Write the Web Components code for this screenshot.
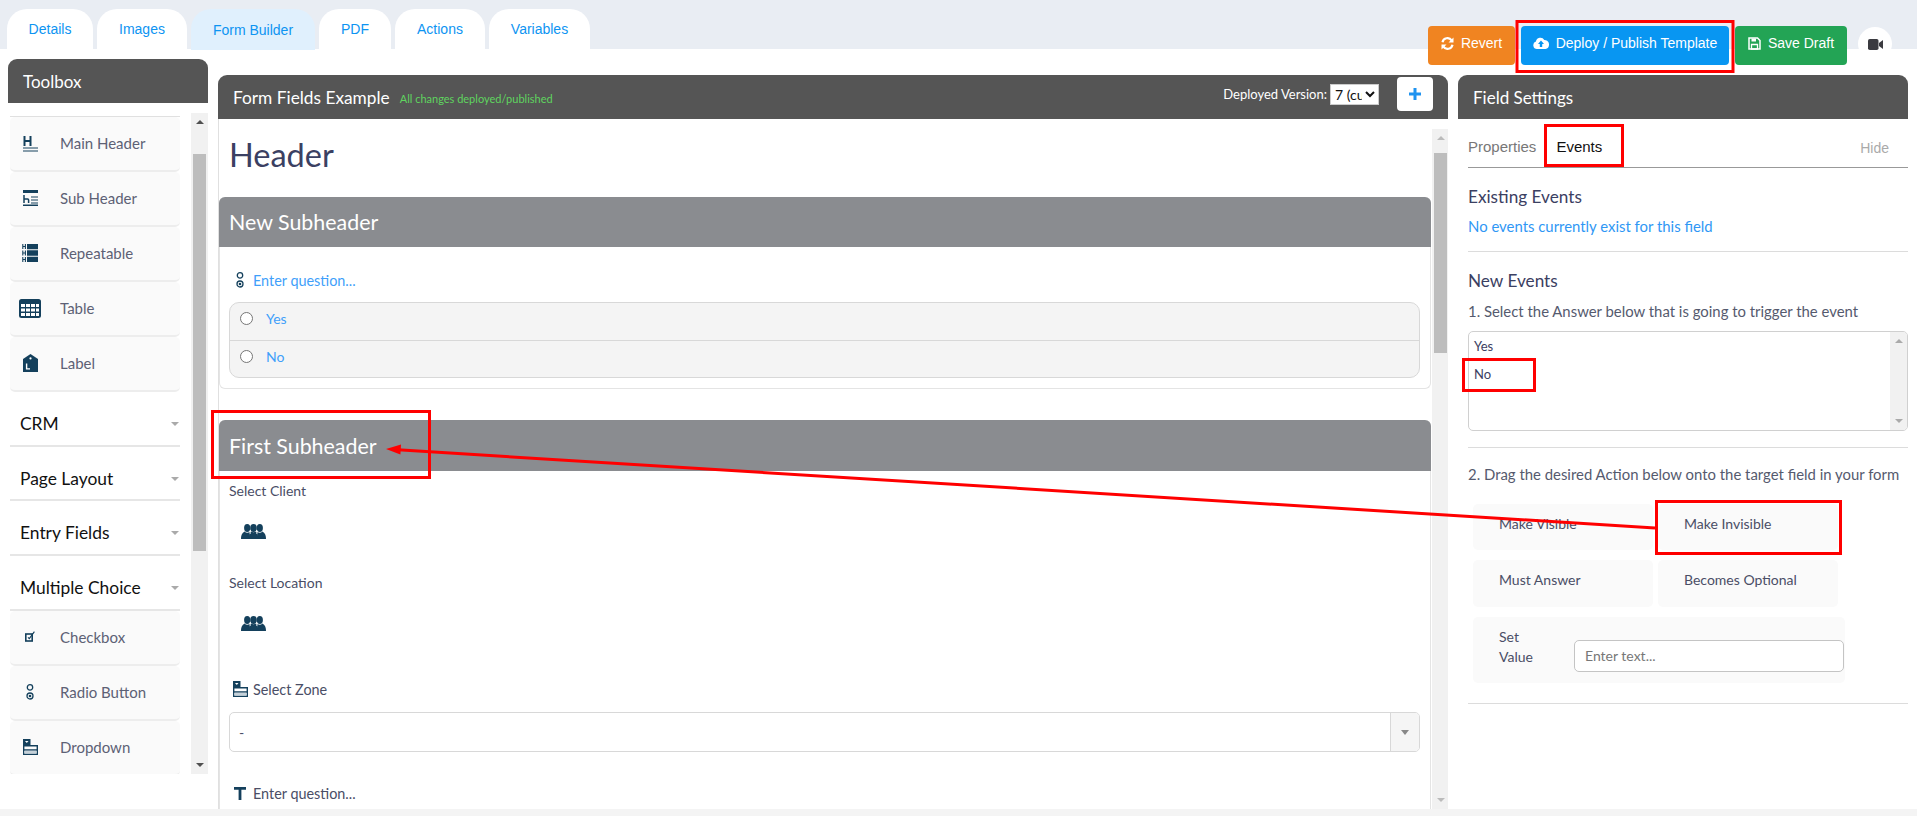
<!DOCTYPE html>
<html lang="en"><head><meta charset="utf-8"><title>Form Builder</title>
<style>
html,body{margin:0;padding:0;background:#fff}
body{width:1917px;height:816px;overflow:hidden;font-family:"Lato","Noto Sans",sans-serif;color:#3b4062;position:relative}
</style></head><body>
<x-app>
  <x-tabbar slot="top">
    <x-tab>Details</x-tab><x-tab style="--w:90px">Images</x-tab><x-tab style="--w:124px" active>Form Builder</x-tab><x-tab style="--w:72px">PDF</x-tab><x-tab style="--w:90px">Actions</x-tab><x-tab style="--w:101px">Variables</x-tab>
    <x-actions slot="actions">
      <x-btn icon="sync" style="--bg:#f08421;--w:87px">Revert</x-btn>
      <x-btn icon="cloud" style="--bg:#0896f2;--w:208px">Deploy / Publish Template</x-btn>
      <x-btn icon="save" style="--bg:#23a455;--w:112px">Save Draft</x-btn>
      <x-round-btn></x-round-btn>
    </x-actions>
  </x-tabbar>
  <x-toolbox slot="left">
    <x-tool icon="h1">Main Header</x-tool>
    <x-tool icon="h2">Sub Header</x-tool>
    <x-tool icon="repeat">Repeatable</x-tool>
    <x-tool icon="table">Table</x-tool>
    <x-tool icon="tag">Label</x-tool>
    <x-section>CRM</x-section>
    <x-section>Page Layout</x-section>
    <x-section>Entry Fields</x-section>
    <x-section>Multiple Choice</x-section>
    <x-tool icon="check">Checkbox</x-tool>
    <x-tool icon="radio">Radio Button</x-tool>
    <x-tool icon="drop">Dropdown</x-tool>
  </x-toolbox>
  <x-form-panel slot="center">
    <x-card heading="New Subheader" style="--head:50px;--pb:10px">
      <x-question icon="radio" blue style="--mt:23px">Enter question...</x-question>
      <x-radio-group><x-radio-row>Yes</x-radio-row><x-radio-row>No</x-radio-row></x-radio-group>
    </x-card>
    <x-card heading="First Subheader" style="--head:51px;--mt:31px">
      <x-field-label style="--mt:10px">Select Client</x-field-label>
      <x-users></x-users>
      <x-field-label style="--mt:0px">Select Location</x-field-label>
      <x-users></x-users>
      <x-question icon="drop" style="--mt:14px">Select Zone</x-question>
      <x-select-box>-</x-select-box>
      <x-question icon="text" style="--mt:31px">Enter question...</x-question>
    </x-card>
  </x-form-panel>
  <x-settings slot="right">
    <x-h style="--mt:19px">Existing Events</x-h>
    <x-p blue style="--mt:9px">No events currently exist for this field</x-p>
    <x-rule style="--mt:15px"></x-rule>
    <x-h style="--mt:19px">New Events</x-h>
    <x-p style="--mt:10px">1. Select the Answer below that is going to trigger the event</x-p>
    <x-listbox><span>Yes</span><span>No</span></x-listbox>
    <x-rule style="--mt:16px"></x-rule>
    <x-p style="--mt:16px">2. Drag the desired Action below onto the target field in your form</x-p>
    <x-tiles>
      <x-tile style="--h:46px">Make Visible</x-tile><x-tile style="--h:46px">Make Invisible</x-tile>
      <x-tile style="--h:47px">Must Answer</x-tile><x-tile style="--h:47px">Becomes Optional</x-tile>
    </x-tiles>
    <x-set-value></x-set-value>
    <x-rule style="--mt:20px"></x-rule>
  </x-settings>
</x-app>
<x-annotations></x-annotations>
<script>
const ICONS={
h1:'<svg width="15" height="17" viewBox="0 0 15 17"><path d="M1.500 1v10M7.500 1v10M1.500 6h6" stroke="#14405c" stroke-width="2" fill="none"/><path d="M0 13h15M0 16h15" stroke="#14405c" stroke-width="1"/></svg>',
h2:'<svg width="15" height="16" viewBox="0 0 15 16"><path d="M0 0h15v3H0zM0 14.600h15V16H0z" fill="#14405c"/><path d="M1 5v8M1 9h3.600a1 1 0 0 1 1 1v3" stroke="#14405c" stroke-width="1.500" fill="none"/><path d="M8 7h7M8 10h7M8 13h7" stroke="#14405c" stroke-width="1"/></svg>',
repeat:'<svg width="16" height="18" viewBox="0 0 16 18"><path d="M5 0h11v5.300H5zM5 6.300h11v5.400H5zM5 12.700h11V18H5z" fill="#14405c"/><path d="M.8 0v5M3.400 0v5M.8 2.500h2.600M.8 6.500v5M3.400 6.500v5M.8 9h2.600M.8 13v5M3.400 13v5M.8 15.500h2.600" stroke="#14405c" stroke-width="1.100" fill="none"/></svg>',
table:'<svg width="22" height="19" viewBox="0 0 22 19"><rect width="22" height="19" rx="2.500" fill="#14405c"/><g fill="#fff"><rect x="2" y="5" width="4" height="3"/><rect x="7" y="5" width="4" height="3"/><rect x="12" y="5" width="4" height="3"/><rect x="17" y="5" width="3" height="3"/><rect x="2" y="9.500" width="4" height="3"/><rect x="7" y="9.500" width="4" height="3"/><rect x="12" y="9.500" width="4" height="3"/><rect x="17" y="9.500" width="3" height="3"/><rect x="2" y="14" width="4" height="3"/><rect x="7" y="14" width="4" height="3"/><rect x="12" y="14" width="4" height="3"/><rect x="17" y="14" width="3" height="3"/></g></svg>',
tag:'<svg width="15" height="18" viewBox="0 0 15 18"><path d="M7.500 0L15 5v13H0V5z" fill="#14405c"/><circle cx="7.500" cy="4.400" r="1.100" fill="#fff"/><path d="M3.600 9.500v5.400H7" stroke="#fff" stroke-width="1.400" fill="none"/></svg>',
check:'<svg width="10" height="11" viewBox="0 0 10 11"><rect x=".8" y="3" width="6.400" height="7" fill="none" stroke="#14405c" stroke-width="1.600"/><path d="M3 6.300L4.300 7.600 9.400.6" stroke="#14405c" stroke-width="1.100" fill="none"/></svg>',
radio:'<svg width="8" height="16" viewBox="0 0 8 16"><circle cx="4" cy="3.400" r="2.700" fill="none" stroke="#14405c" stroke-width="1.300"/><circle cx="4" cy="12" r="3" fill="none" stroke="#14405c" stroke-width="1.300"/><circle cx="4" cy="12" r="1.300" fill="#14405c"/></svg>',
drop:'<svg width="15" height="16" viewBox="0 0 15 16"><path d="M0 0h7.500v6H0z" fill="#14405c"/><path d="M2 2h3.500L3.800 4z" fill="#fff"/><path d="M.7 6v9.300h13.600V6.800H.7M.7 11h13.600" fill="none" stroke="#14405c" stroke-width="1.400"/><path d="M1.400 11.700h12.200v3H1.400z" fill="#c5d1d9"/></svg>',
text:'<svg width="12" height="13" viewBox="0 0 12 13"><path d="M0 0h12v2.800H7.400V13H4.600V2.800H0z" fill="#14405c"/></svg>',
users:'<svg width="25" height="15" viewBox="0 0 25 15"><g fill="#14405c"><ellipse cx="12.500" cy="4" rx="3.300" ry="4"/><ellipse cx="6.200" cy="4" rx="3.100" ry="4"/><ellipse cx="18.800" cy="4" rx="3.100" ry="4"/><path d="M0 15c0-3 .6-6 3.500-7.500C5 9 7.500 9 8.500 7.800L9 15z"/><path d="M25 15c0-3-.6-6-3.500-7.500C20 9 17.500 9 16.500 7.800L16 15z"/><path d="M7.800 15c0-3.500.8-6.500 2.200-7.500 1.500 1 3.500 1 5 0 1.400 1 2.200 4 2.200 7.500z"/></g><path d="M9.300 6v4M15.700 6v4" stroke="#fff" stroke-width=".7"/></svg>',
sync:'<svg width="13" height="13" viewBox="0 0 13 13"><g fill="none" stroke="#fff" stroke-width="2.200"><path d="M1.500 5.200A5 5 0 0 1 10.600 3.400"/><path d="M11.500 7.800A5 5 0 0 1 2.400 9.600"/></g><path d="M12.500 .4v5.100H7.500zM.5 12.600V7.500h5z" fill="#fff"/></svg>',
cloud:'<svg width="16" height="12" viewBox="0 0 16 12"><path d="M4 12a3.800 3.800 0 0 1-1.100-7.400A4.500 4.500 0 0 1 11.300 3a3 3 0 0 1 1.500 .3A4.500 4.500 0 0 1 12.500 12z" fill="#fff"/><path d="M8 3.500L11 7H9.200v3H6.800V7H5z" fill="#0896f2"/></svg>',
save:'<svg width="13" height="13" viewBox="0 0 13 13"><path d="M1 1h8.500L12 3.500V12H1z" fill="none" stroke="#fff" stroke-width="1.500"/><path d="M3.500 1.500h4.500v3H3.500z" fill="#fff"/><path d="M3.500 7.500h6V12h-6z" fill="none" stroke="#fff" stroke-width="1.300"/></svg>',
video:'<svg width="15" height="11" viewBox="0 0 15 11"><rect width="10.500" height="11" rx="1.800" fill="#3a3a40"/><path d="M11 4l4-3v9l-4-3z" fill="#3a3a40"/></svg>'
};
function el(name,css,html,extra){
  customElements.define(name,class extends HTMLElement{
    constructor(){super();const r=this.attachShadow({mode:'open'});
      r.innerHTML='<style>'+css+'</style>'+(typeof html==='function'?html(this):html);
      if(extra)extra(r,this);}
  });
}

el('x-icon',':host{display:inline-flex;line-height:0}','',(r,h)=>{r.innerHTML+=ICONS[h.getAttribute('name')]||'';});

el('x-app',`:host{display:block;width:1917px;height:816px;position:relative;background:#fff}
.main{display:flex;height:760px;padding-left:8px;align-items:flex-start;box-sizing:border-box}
.foot{height:7px;background:#f4f4f4}`,
`<slot name="top"></slot><div class="main"><slot name="left"></slot><slot name="center"></slot><slot name="right"></slot></div><div class="foot"></div>`);

el('x-tabbar',`:host{display:flex;height:49px;background:#e9edf3;box-sizing:border-box;padding:9px 0 0 7px;gap:4px;position:relative;align-items:flex-start}
::slotted([slot=actions]){margin-left:auto}`,`<slot></slot><slot name="actions"></slot>`);

el('x-tab',`:host{display:flex;align-items:center;justify-content:center;box-sizing:border-box;width:var(--w,86px);height:40px;padding-bottom:0;background:#fff;border-radius:20px 20px 0 0/20px 20px 0 0;font:14px "Liberation Sans",Arial,sans-serif;color:#0d94f2}
:host([active]){background:#e0f0fd;height:41px}`,`<slot></slot>`);

el('x-actions',`:host{display:flex;align-items:flex-start;margin-top:17px;padding-right:25px;z-index:2}
::slotted(x-btn){margin-right:6px}`,`<slot></slot>`);

el('x-btn',`:host{display:flex;align-items:center;justify-content:center;gap:7px;box-sizing:border-box;width:var(--w);height:39px;padding-bottom:5px;background:var(--bg);border-radius:4px;color:#fff;font:14px "Liberation Sans",Arial,sans-serif}`,
h=>`<x-icon name="${h.getAttribute('icon')}"></x-icon><span><slot></slot></span>`);

el('x-round-btn',`:host{display:flex;align-items:center;justify-content:center;width:34px;height:34px;margin:1px 0 0 5px;border-radius:50%;background:#fff}`,`<x-icon name="video"></x-icon>`);

el('x-panel-head',`:host{display:flex;align-items:center;height:44px;box-sizing:border-box;background:#555;border-radius:9px 9px 0 0;color:#fff;font-size:17px;padding-left:var(--pl,15px)}`,`<slot></slot>`);

el('x-scrollbar',`:host{display:flex;flex-direction:column;align-items:center;width:17px;background:#f1f1f1;box-sizing:border-box;flex:none;margin-top:var(--mt,0)}
.a{width:0;height:0;border:4px solid transparent;flex:none}
.u{border-top:0;border-bottom:4px solid var(--arrow,#505050);margin-top:7px}
.d{border-bottom:0;border-top:4px solid var(--arrow,#505050);margin:auto 0 7px}
.t{width:13px;height:var(--thumb);margin-top:var(--top);background:#bdbdbd;flex:none}`,
`<div class="a u"></div><div class="t"></div><div class="a d"></div>`);

el('x-toolbox',`:host{display:block;width:200px;margin-top:10px;flex:none}
.body{display:flex;height:661px;padding-top:10px;box-sizing:content-box}
.list{margin:3px 0 0 2px;width:170px;margin-right:11px;height:658px;overflow:hidden;border-top:1px solid #e0e0e0;box-sizing:border-box}
x-scrollbar{height:661px}`,
`<x-panel-head>Toolbox</x-panel-head><div class="body"><div class="list"><slot></slot></div><x-scrollbar style="--top:30px;--thumb:397px"></x-scrollbar></div>`);

el('x-tool',`:host{display:flex;align-items:flex-start;box-sizing:border-box;height:55px;background:#fafafa;border-bottom:2px solid #ededed;border-radius:5px;font-size:15px;line-height:20px;color:#5d6175;padding-top:16px}
.i{width:50px;height:20px;display:flex;align-items:center;justify-content:center;padding-right:10px;box-sizing:border-box;flex:none}`,
h=>`<div class="i"><x-icon name="${h.getAttribute('icon')}"></x-icon></div><slot></slot>`);

el('x-section',`:host{display:flex;align-items:flex-start;justify-content:space-between;box-sizing:border-box;height:54.7px;border-bottom:2px solid #e6e6e6;font-size:17.4px;line-height:20px;color:#111;padding:22px 1px 0 10px}
.c{width:0;height:0;border:4px solid transparent;border-bottom:0;border-top:4px solid #aaa;margin-top:8px}`,`<slot></slot><div class="c"></div>`);

el('x-form-panel',`:host{display:block;width:1230px;margin:26px 0 0 10px;flex:none}
.body{display:flex;height:690px;border-left:1px solid #e0e0e0;overflow:hidden}
.content{width:1212px;flex:none;overflow:hidden}
h1{margin:0;height:78px;box-sizing:border-box;padding:17px 0 0 10px;font:400 32.5px/38px "Lato","Noto Sans",sans-serif;color:#3b4062}
.title{display:flex;align-items:center;flex:1;height:100%}
.t{font-size:17.3px;color:#fff}.s{font-size:11px;color:#5fd45f;margin-left:10px;padding-top:3px}
.dv{font-size:13px;color:#fff;margin-left:auto;padding:0 3px 6px 0}
select{width:49px;height:21px;margin-bottom:6px;border:1px solid #ccc;border-radius:0;background:#fff;font:14px "Lato",sans-serif;padding:0;color:#111}
.plus{display:flex;align-items:center;justify-content:center;width:36px;height:34px;margin:0 15px 6px 18px;background:#fff;border-radius:4px}
x-scrollbar{height:680px;margin-left:1px}`,
`<x-panel-head>
  <div class="title"><span class="t">Form Fields Example</span><span class="s">All changes deployed/published</span>
  <span class="dv">Deployed Version:</span><select><option>7 (current)</option></select>
  <div class="plus"><svg width="12" height="12" viewBox="0 0 12 12"><path d="M6 0v12M0 6h12" stroke="#1f93f0" stroke-width="3"/></svg></div></div>
</x-panel-head>
<div class="body"><div class="content"><h1>Header</h1><slot></slot></div><x-scrollbar style="--top:13px;--thumb:200px;--mt:10px;--arrow:#bbb"></x-scrollbar></div>`);

el('x-card',`:host{display:block;width:1212px;box-sizing:border-box;border:1px solid #e4e4e4;border-top:0;border-radius:6px;margin-top:var(--mt,0);padding-bottom:var(--pb,11px)}
.h{display:flex;align-items:center;height:var(--head);margin:0 -1px;padding-left:10px;background:#8a8c90;color:#fff;font-size:21.4px;border-radius:6px 6px 0 0}
.b{padding:0 10px 0 9px}`,
h=>`<div class="h">${h.getAttribute('heading')}</div><div class="b"><slot></slot></div>`);

el('x-question',`:host{display:flex;align-items:center;height:20px;margin-top:var(--mt,0);font-size:14.4px;color:#4a4e66}
:host([blue]){color:#3f9ffa}
.i{width:24px;display:flex;justify-content:center;padding-right:2px;box-sizing:border-box;flex:none}`,
h=>`<div class="i"><x-icon name="${h.getAttribute('icon')}"></x-icon></div><slot></slot>`);

el('x-radio-group',`:host{display:block;margin-top:12px;box-sizing:border-box;height:76px;border:1px solid #d8d8d8;border-radius:10px;background:#f4f4f4}
::slotted(x-radio-row:first-child){border-bottom:1px solid #d8d8d8}`,`<slot></slot>`);

el('x-radio-row',`:host{display:flex;align-items:center;box-sizing:border-box;height:37.5px;padding:0 0 5px 10px;font-size:14px;color:#3f9ffa}
.r{width:11px;height:11px;border:1px solid #767676;border-radius:50%;background:#fff;margin-right:13px;flex:none}`,`<div class="r"></div><slot></slot>`);

el('x-field-label',`:host{display:block;height:20px;line-height:20px;margin-top:var(--mt,0);font-size:14px;color:#4a4e66}`,`<slot></slot>`);
el('x-users',`:host{display:block;height:72px;padding:23px 0 0 12px;box-sizing:border-box;line-height:0}`,`<x-icon name="users"></x-icon>`);

el('x-select-box',`:host{display:flex;margin-top:13px;height:40px;box-sizing:border-box;border:1px solid #d8d8d8;border-radius:5px;font-size:14px;color:#4a4e66;align-items:stretch}
.v{flex:1;padding:0 9px;display:flex;align-items:center}
.a{width:28px;border-left:1px solid #d8d8d8;background:#f5f5f5;display:flex;align-items:center;justify-content:center;border-radius:0 4px 4px 0}
.a div{width:0;height:0;border:4px solid transparent;border-bottom:0;border-top:5px solid #888}`,
`<div class="v"><slot></slot></div><div class="a"><div></div></div>`);

el('x-settings',`:host{display:block;width:450px;margin:26px 0 0 10px;flex:none}
.body{padding-left:10px}
.tabs{display:flex;height:49px;box-sizing:border-box;border-bottom:1px solid #999;padding-top:18px;font:15px/20px "Liberation Sans",Arial,sans-serif}
.p{color:#777}.e{color:#111;margin-left:20px}.hide{color:#aaa;margin-left:auto;margin-right:19px;font-size:14px;padding-top:1px}`,
`<x-panel-head style="--pl:15px">Field Settings</x-panel-head><div class="body"><div class="tabs"><span class="p">Properties</span><span class="e">Events</span><span class="hide">Hide</span></div><slot></slot></div>`);

el('x-h',`:host{display:block;height:20px;line-height:20px;margin-top:var(--mt);font-size:17.2px;color:#3b4062}`,`<slot></slot>`);
el('x-p',`:host{display:block;height:20px;line-height:20px;margin-top:var(--mt);font-size:14.9px;color:#555a6e;white-space:nowrap}
:host([blue]){color:#2f97f5}`,`<slot></slot>`);
el('x-rule',`:host{display:block;height:1px;background:#dcdcdc;margin-top:var(--mt)}`,'');

el('x-listbox',`:host{display:flex;margin-top:10px;height:100px;box-sizing:border-box;border:1px solid #d0d0d0;border-radius:5px;font-size:13px;color:#3b4062;overflow:hidden}
.l{flex:1;padding:3px 0 0 5px;display:flex;flex-direction:column}
::slotted(span){display:block;height:28px;line-height:22px}
x-scrollbar{height:98px;--arrow:#aaa}`,
`<div class="l"><slot></slot></div><x-scrollbar style="--top:0px;--thumb:0px"></x-scrollbar>`);

el('x-tiles',`:host{display:grid;grid-template-columns:180px 180px;gap:10px 5px;margin:20px 0 0 5px}`,`<slot></slot>`);
el('x-tile',`:host{display:block;box-sizing:border-box;height:var(--h);background:#fafafa;border-radius:5px;padding:10px 0 0 26px;font-size:14px;line-height:20px;color:#4a4e66}`,`<slot></slot>`);
el('x-set-value',`:host{display:flex;box-sizing:border-box;width:372px;height:66px;margin:10px 0 0 5px;background:#fafafa;border-radius:5px;padding:10px 0 0 26px;font-size:14px;line-height:20px;color:#4a4e66}
.l{width:75px;flex:none}
.f{width:270px;height:32px;margin-top:13px;box-sizing:border-box;border:1px solid #c4c4c4;border-radius:5px;background:#fff;padding:0 10px;line-height:30px;color:#777;flex:none;font-size:14px}`,
`<div class="l">Set<br>Value</div><div class="f">Enter text...</div>`);

el('x-annotations',`:host{position:absolute;left:0;top:0;width:1917px;height:816px;pointer-events:none;z-index:5}
svg{display:block}`,
`<svg width="1917" height="816" viewBox="0 0 1917 816" fill="none" stroke="#f00" stroke-width="3">
<rect x="1517" y="21.500" width="216" height="50"/>
<rect x="1545.500" y="125.500" width="77" height="40"/>
<rect x="1463.500" y="359.500" width="71" height="31"/>
<rect x="1656.500" y="501.500" width="184" height="52"/>
<rect x="212.500" y="411.500" width="217" height="66"/>
<path d="M1655 528L398 449.800" stroke-width="3"/>
<path d="M386 449L401 444.500L400.400 454.500Z" fill="#f00" stroke="none"/>
</svg>`);
</script>
</body></html>
